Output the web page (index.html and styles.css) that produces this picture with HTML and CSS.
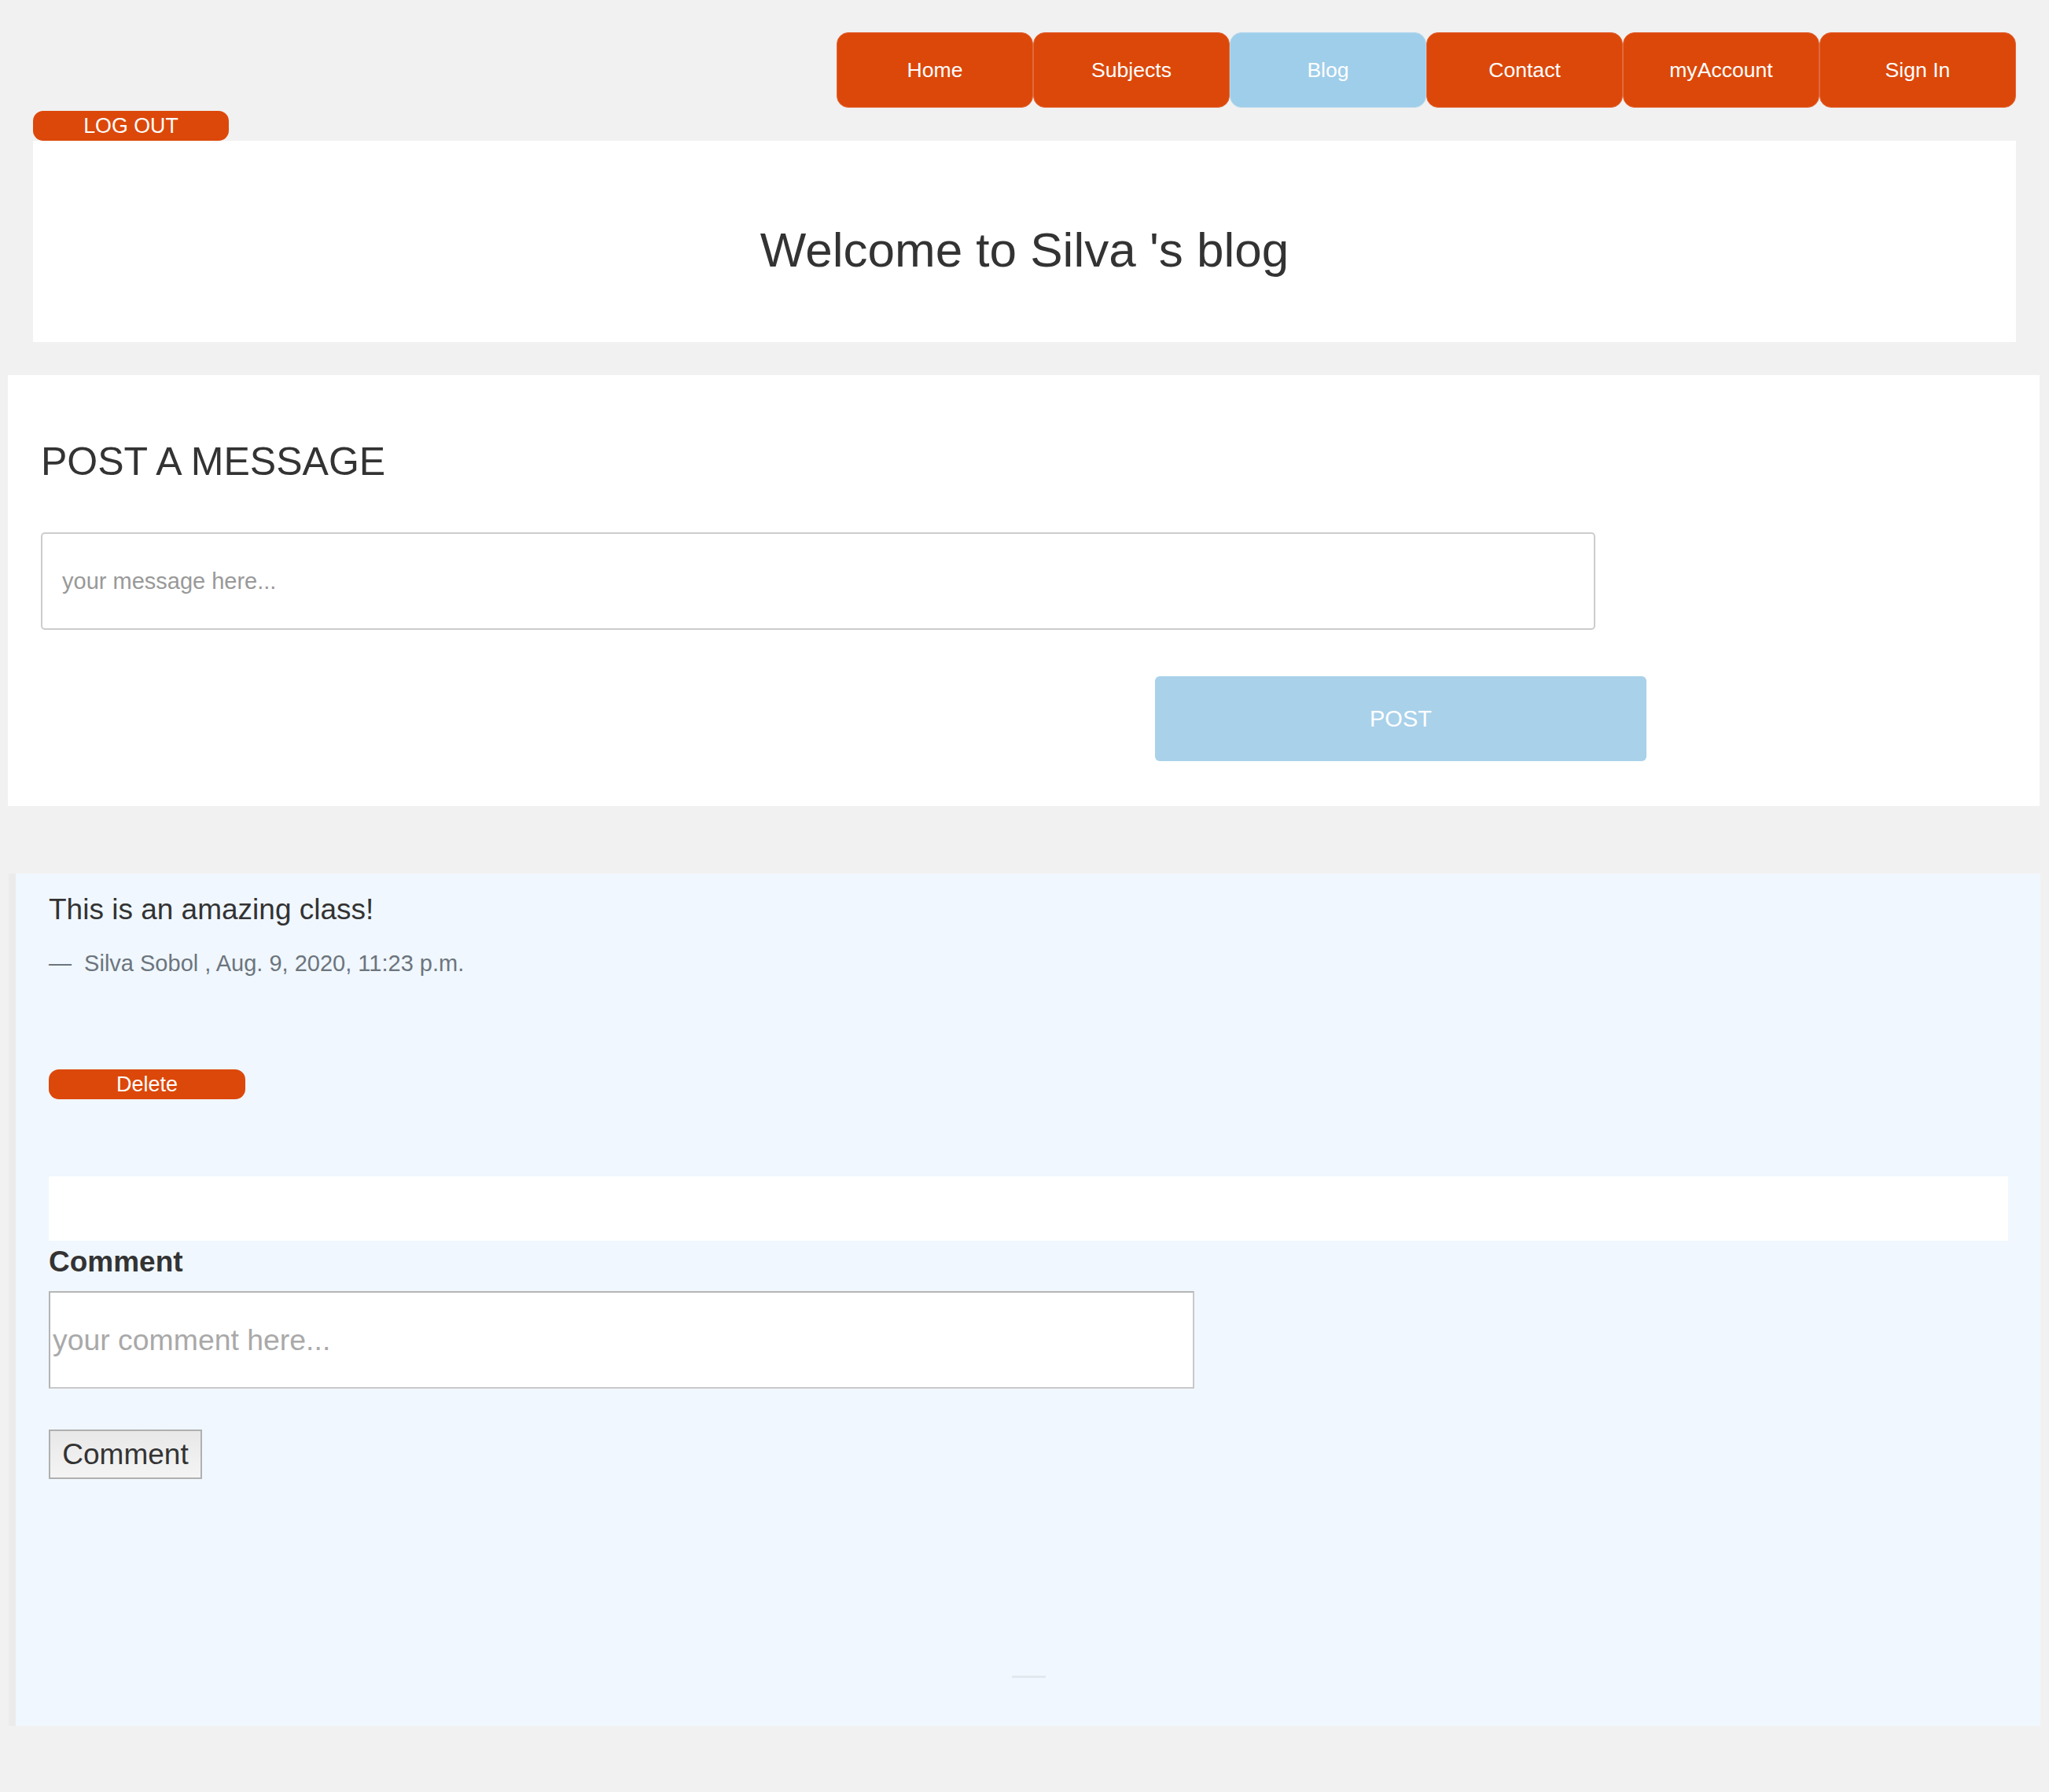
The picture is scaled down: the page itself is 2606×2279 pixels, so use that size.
FILE: index.html
```html
<!DOCTYPE html>
<html lang="en">
<head>
<meta charset="utf-8">
<title>Silva's blog</title>
<link rel="stylesheet" href="styles.css">
</head>
<body>
<nav class="topnav">
  <a class="nav-btn">Home</a>
  <a class="nav-btn">Subjects</a>
  <a class="nav-btn nav-btn-active">Blog</a>
  <a class="nav-btn">Contact</a>
  <a class="nav-btn">myAccount</a>
  <a class="nav-btn">Sign In</a>
</nav>
<div class="hero-wrap">
  <a class="logout">LOG OUT</a>
  <header class="hero"><h1 class="hero-title">Welcome to Silva 's blog</h1></header>
</div>
<section class="composer">
  <h2 class="composer-title">POST A MESSAGE</h2>
  <input class="msg-input" type="text" placeholder="your message here...">
  <button class="post-btn">POST</button>
</section>
<article class="post">
  <p class="post-text">This is an amazing class!</p>
  <footer class="post-meta">&mdash;&nbsp; Silva Sobol , Aug. 9, 2020, 11:23 p.m.</footer>
  <button class="delete-btn">Delete</button>
  <div class="comments-box"></div>
  <label class="comment-label">Comment</label>
  <input class="comment-input" type="text" placeholder="your comment here...">
  <button class="comment-btn">Comment</button>
  <hr class="divider">
</article>
</body>
</html>
```
FILE: styles.css
```css
html, body {
  margin: 0;
  padding: 0;
}
body {
  background: #f1f1f1;
  font-family: "Liberation Sans", Arial, sans-serif;
  color: #333;
  min-height: 2279px;
}
.topnav {
  display: flex;
  justify-content: flex-end;
  padding: 41px 42px 0 0;
}
.nav-btn {
  width: 250px;
  height: 96px;
  display: flex;
  align-items: center;
  justify-content: center;
  background: #dc480a;
  color: #fff;
  font-size: 26.6px;
  border-radius: 15px;
  box-sizing: border-box;
  border: 1px solid #e2693a;
}
.nav-btn-active {
  background: #9fceea;
  border-color: #b5d9ee;
}
.hero-wrap {
  display: flex;
  flex-direction: column;
  align-items: flex-start;
  padding: 4px 42px 0 42px;
}
.logout {
  width: 249px;
  height: 38px;
  background: #dc480a;
  color: #fff;
  font-size: 26.8px;
  border-radius: 13px 13px 13px 13px;
  display: flex;
  align-items: center;
  justify-content: center;
}
.hero {
  align-self: stretch;
  height: 256px;
  box-sizing: border-box;
  background: #fff;
  padding-top: 103px;
}
.hero-title {
  margin: 0;
  font-weight: normal;
  font-size: 62px;
  line-height: 72px;
  text-align: center;
  color: #333;
}
.composer {
  margin: 42px 0 0 10px;
  width: 2584px;
  height: 548px;
  box-sizing: border-box;
  background: #fff;
  padding: 81px 0 0 42px;
  display: flex;
  flex-direction: column;
  align-items: flex-start;
}
.composer-title {
  margin: 0;
  font-weight: normal;
  font-size: 50px;
  line-height: 58px;
  color: #333;
}
.msg-input {
  margin-top: 61px;
  width: 1977px;
  height: 124px;
  box-sizing: border-box;
  border: 2px solid #cccccc;
  border-radius: 5px;
  padding: 0 0 0 25px;
  font-family: "Liberation Sans", Arial, sans-serif;
  font-size: 29px;
  background: #fff;
  outline: none;
}
.msg-input::placeholder {
  color: #999;
}
.post-btn {
  margin: 59px 0 0 1417px;
  width: 625px;
  height: 108px;
  border: none;
  border-radius: 6px;
  background: #a9d1ea;
  color: #fff;
  font-family: "Liberation Sans", Arial, sans-serif;
  font-size: 29px;
}
.post {
  margin: 86px 0 0 11px;
  width: 2584px;
  box-sizing: border-box;
  border-left: 9px solid #ebebeb;
  background: #f0f7fe;
  padding: 24px 41px 61px 42px;
  display: flex;
  flex-direction: column;
  align-items: flex-start;
}
.post-text {
  margin: 0;
  font-size: 37px;
  line-height: 43px;
  color: #333;
}
.post-meta {
  margin-top: 31px;
  font-size: 29px;
  line-height: 33px;
  color: #6c757d;
}
.delete-btn {
  margin-top: 118px;
  width: 250px;
  height: 38px;
  border: none;
  border-radius: 13px;
  background: #dc480a;
  color: #fff;
  font-family: "Liberation Sans", Arial, sans-serif;
  font-size: 27px;
  padding: 0;
}
.comments-box {
  margin-top: 98px;
  width: 2492px;
  height: 82px;
  background: #fff;
}
.comment-label {
  margin-top: 5px;
  font-weight: bold;
  font-size: 37px;
  line-height: 43px;
  color: #333;
}
.comment-input {
  margin-top: 16px;
  width: 1457px;
  height: 124px;
  box-sizing: border-box;
  border: 2px solid #c9c9c9;
  border-left-color: #b5b5b5;
  border-top-color: #b5b5b5;
  padding: 0 0 0 3px;
  font-family: "Liberation Sans", Arial, sans-serif;
  font-size: 37.4px;
  background: #fff;
  outline: none;
}
.comment-input::placeholder {
  color: #a9a9a9;
}
.comment-btn {
  margin-top: 52px;
  width: 195px;
  height: 63px;
  box-sizing: border-box;
  border: 2px solid #b0b0b0;
  border-radius: 0;
  background: linear-gradient(#e8e8e8, #f4f4f4);
  color: #333;
  font-family: "Liberation Sans", Arial, sans-serif;
  font-size: 37px;
  padding: 0;
}
.divider {
  margin: 250px auto 0 auto;
  width: 43px;
  height: 3px;
  border: none;
  background: #e3e8ee;
  align-self: center;
}
```
